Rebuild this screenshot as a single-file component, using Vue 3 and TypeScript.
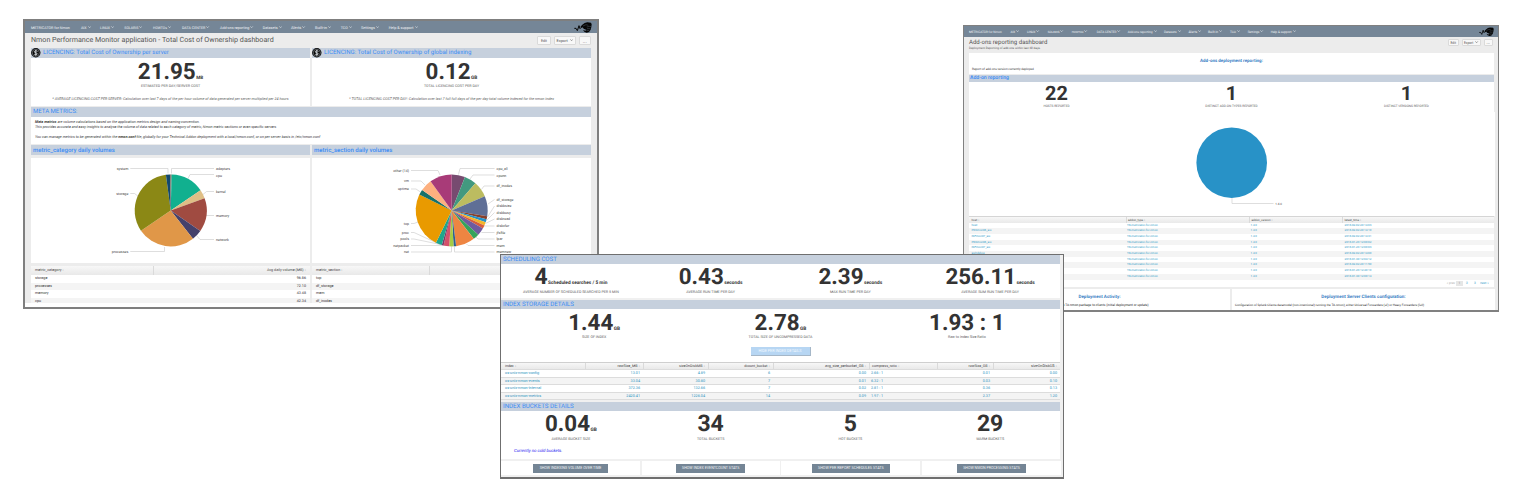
<script setup lang="ts">
import type { Directive } from 'vue'

/** Sizes a label so that it takes up the given width in pixels. */
const vFit: Directive<HTMLElement, number> = {
  mounted(el, binding) {
    const base = 20
    el.style.fontSize = `${base}px`
    const width = el.getBoundingClientRect().width
    if (width > 0) el.style.fontSize = `${(base * binding.value) / width}px`
  },
}

type Item = [string, number]
interface Metric { value: string; w: number; unit?: string; uw?: number; caption: string; cw: number }
interface Slice { to: number; color: string }
interface Label { x: number; y: number; text: string; end?: boolean; line: string }

const nav: Item[] = [
  ['METRICATOR for Nmon', 39], ['AIX', 5.6], ['LINUX', 10], ['SOLARIS', 14], ['HOWTOs', 14],
  ['DATA CENTER', 23.5], ['Add-ons reporting', 29.5], ['Datasets', 15], ['Alerts', 10.5],
  ['Built-in', 12], ['TCO', 7], ['Settings', 14], ['Help & support', 25],
]

const licences = [
  {
    title: 'LICENCING: Total Cost of Ownership per server', tw: 126,
    value: '21.95', w: 58, unit: 'MB', uw: 7,
    caption: 'ESTIMATED PER DAY/SERVER COST', cw: 59.5,
    note: '* AVERAGE LICENCING COST PER SERVER: Calculation over last 7 days of the per hour volume of data generated per server multiplied per 24 hours', nw: 237,
  },
  {
    title: 'LICENCING: Total Cost of Ownership of global indexing', tw: 147.5,
    value: '0.12', w: 45, unit: 'GB', uw: 6.3,
    caption: 'TOTAL LICENCING COST PER DAY', cw: 55.5,
    note: '* TOTAL LICENCING COST PER DAY: Calculation over last 7 full full days of the per day total volume indexed for the nmon index', nw: 205,
  },
]

function sector(cx: number, cy: number, r: number, from: number, to: number): string {
  const p = (a: number) => {
    const t = (a * Math.PI) / 180
    return `${(cx + r * Math.sin(t)).toFixed(2)} ${(cy - r * Math.cos(t)).toFixed(2)}`
  }
  return `M${cx} ${cy}L${p(from)}A${r} ${r} 0 ${to - from > 180 ? 1 : 0} 1 ${p(to)}Z`
}

function pie(cx: number, cy: number, r: number, slices: Slice[]) {
  return slices.map((s, i) => ({ color: s.color, d: sector(cx, cy, r, i ? slices[i - 1].to : 0, s.to) }))
}

const toSlices = (raw: [number, string][]): Slice[] => raw.map(([to, color]) => ({ to, color }))

const charts: { title: string; tw: number; view: string; slices: { color: string; d: string }[]; labels: Label[] }[] = [
  {
    title: 'metric_category daily volumes', tw: 82, view: '31 158 279 105',
    slices: pie(170.7, 210.4, 36, toSlices([
      [1.5, '#6d6257'], [56, '#11b08f'], [70.4, '#dfbf86'], [124.7, '#a04b41'], [141.8, '#45416b'],
      [235.7, '#e09748'], [352.3, '#8b8815'], [358.8, '#14486d'], [360, '#6d6257'],
    ])),
    labels: [
      { x: 128.3, y: 168.7, text: 'system', end: true, line: 'M130.3 168.5H168v5' },
      { x: 128.3, y: 193.7, text: 'storage', end: true, line: 'M130.3 193.5H134.5L138.5 196.5' },
      { x: 128.3, y: 252, text: 'processes', end: true, line: 'M130.3 251.5H164.5V247' },
      { x: 216, y: 168.7, text: 'adapters', line: 'M214 168.5H171.5v5' },
      { x: 216, y: 175.5, text: 'cpu', line: 'M214 174.5H190L188 178.5' },
      { x: 216, y: 191.5, text: 'kernel', line: 'M214 191.5H206.5L203 194.5' },
      { x: 216, y: 215.7, text: 'memory', line: 'M214 215.5H206' },
      { x: 216, y: 239.7, text: 'network', line: 'M214 239.5H200L196.5 235.5' },
    ],
  },
  {
    title: 'metric_section daily volumes', tw: 78.5, view: '312 158 279 105',
    slices: pie(451.7, 210.4, 36, toSlices([
      [21.6, '#774b70'], [41.2, '#42997f'], [66.8, '#bcbc60'], [99.5, '#5f6f96'], [104.4, '#87402c'],
      [109.4, '#2492c8'], [114.7, '#f2b52c'], [120, '#d85e3c'], [132.4, '#6f5b9f'], [142.2, '#35a35c'],
      [173, '#ee8542'], [177, '#2f5f8f'], [184, '#a5cc43'], [193, '#d5516b'], [196, '#7b3a68'],
      [206, '#1fa68c'], [296, '#e99a00'], [304.7, '#16716a'], [324, '#fdb07f'], [360, '#a83b78'],
    ])),
    labels: [
      { x: 409, y: 170.7, text: 'other (14)', end: true, line: 'M411 170.5H438L440 175' },
      { x: 409, y: 181, text: 'vm', end: true, line: 'M411 181H421L425 185' },
      { x: 409, y: 189, text: 'uptime', end: true, line: 'M411 189H416L420.5 192' },
      { x: 409, y: 224, text: 'top', end: true, line: 'M411 223.5H414L418 222' },
      { x: 409, y: 232.5, text: 'proc', end: true, line: 'M411 232.5H414L440 244.5' },
      { x: 409, y: 239, text: 'pools', end: true, line: 'M411 239H414L443 245' },
      { x: 409, y: 245.7, text: 'netpacket', end: true, line: 'M411 245.5H446' },
      { x: 409, y: 252, text: 'net', end: true, line: 'M411 252H451.5V246.5' },
      { x: 496.5, y: 169, text: 'cpu_all', line: 'M494.5 168.5H460L458.5 174.5' },
      { x: 496.5, y: 175.5, text: 'cpunn', line: 'M494.5 175H473L470 179' },
      { x: 496.5, y: 186, text: 'df_inodes', line: 'M494.5 186H484L481.5 189.5' },
      { x: 496.5, y: 199.5, text: 'df_storage', line: 'M494.5 199.5L488 204' },
      { x: 496.5, y: 206, text: 'diskbsize', line: 'M494.5 206L487.5 217' },
      { x: 496.5, y: 212.5, text: 'diskbusy', line: 'M494.5 212.5L486.5 220.5' },
      { x: 496.5, y: 219, text: 'diskread', line: 'M494.5 219L485.5 223.5' },
      { x: 496.5, y: 226, text: 'diskxfer', line: 'M494.5 226H484' },
      { x: 496.5, y: 232.5, text: 'jfsfile', line: 'M494.5 232.5H481.5' },
      { x: 496.5, y: 239, text: 'lpar', line: 'M494.5 239H478L476 237' },
      { x: 496.5, y: 245.7, text: 'mem', line: 'M494.5 245.5H468L466.5 244' },
      { x: 496.5, y: 252, text: 'memnew', line: 'M494.5 252H454.5V246.5' },
    ],
  },
]

const categoryRows = [['storage', '96.86'], ['processes', '72.10'], ['memory', '43.48'], ['cpu', '42.34']]
const sectionRows = ['top', 'df_storage', 'mem', 'df_inodes']

const scheduling: Metric[] = [
  { value: '4', w: 13.2, unit: 'Scheduled searches / 5 min', uw: 59.5, caption: 'AVERAGE NUMBER OF SCHEDULED SEARCHED PER 5 MIN', cw: 96 },
  { value: '0.43', w: 45, unit: 'seconds', uw: 18.3, caption: 'AVERAGE RUN TIME PER DAY', cw: 49 },
  { value: '2.39', w: 45, unit: 'seconds', uw: 18.3, caption: 'MAX RUN TIME PER DAY', cw: 41 },
  { value: '256.11', w: 70.5, unit: 'seconds', uw: 18.3, caption: 'AVERAGE SUM RUN TIME PER DAY', cw: 58 },
]
const storage: Metric[] = [
  { value: '1.44', w: 45, unit: 'GB', uw: 6.3, caption: 'SIZE OF INDEX', cw: 24.5 },
  { value: '2.78', w: 45, unit: 'GB', uw: 6.3, caption: 'TOTAL SIZE OF UNCOMPRESSED DATA', cw: 64 },
  { value: '1.93 : 1', w: 75.5, caption: 'Raw to Index Size Ratio', cw: 38 },
]
const buckets: Metric[] = [
  { value: '0.04', w: 45, unit: 'GB', uw: 6.3, caption: 'AVERAGE BUCKET SIZE', cw: 39 },
  { value: '34', w: 26.4, caption: 'TOTAL BUCKETS', cw: 27.5 },
  { value: '5', w: 13.2, caption: 'HOT BUCKETS', cw: 24 },
  { value: '29', w: 26.4, caption: 'WARM BUCKETS', cw: 28 },
]
const indexHead: Item[] = [
  ['index', 8.7], ['rawSize_MB', 20], ['sizeOnDiskMB', 23.5], ['dcount_bucket', 23.5],
  ['avg_size_perbucket_GB', 38.5], ['compress_ratio', 25], ['rawSize_GB', 19], ['sizeOnDiskGB', 23.5],
]
const indexRows = [
  ['os-unix-nmon-config', '13.01', '4.89', '6', '0.00', '2.66 : 1', '0.01', '0.00'],
  ['os-unix-nmon-events', '33.04', '30.80', '7', '0.01', '6.32 : 1', '0.03', '0.10'],
  ['os-unix-nmon-internal', '372.36', '132.66', '7', '0.02', '2.81 : 1', '0.36', '0.13'],
  ['os-unix-nmon-metrics', '2420.41', '1226.04', '14', '0.09', '1.97 : 1', '2.37', '1.20'],
]
const actions: [string, number, string][] = [
  ['SHOW INDEXING VOLUME OVER TIME', 62, 'a75'], ['SHOW INDEX EVENTCOUNT STATS', 57.5, 'a69'],
  ['SHOW PER REPORT SCHEDULES STATS', 66, 'a78'], ['SHOW NMON PROCESSING STATS', 57, 'a69'],
]

const addons: Metric[] = [
  { value: '22', w: 22.8, caption: 'HOSTS REPORTED', cw: 26.3 },
  { value: '1', w: 11.4, caption: 'DISTINCT ADD-ON TYPES REPORTED', cw: 52.5 },
  { value: '1', w: 11.4, caption: 'DISTINCT VERSIONS REPORTED', cw: 45 },
]
const hosts: [string, string][] = [
  ['host', '2018-02-02 20:14:03'], ['PRDmon06_aix', '2018-02-02 20:14:10'], ['INFmon07_aix', '2018-02-02 20:14:31'],
  ['PRDmon06_aix', '2018-01-29 12:00:02'], ['INFmon07_aix', '2018-01-29 12:00:03'], ['aixhdxbox', '2018-02-02 20:14:00'],
  ['', '2018-01-30 12:04:12'], ['', '2018-02-02 20:11:50'], ['', '2018-01-29 12:40:10'],
  ['', '2018-01-30 12:00:14'],
]
</script>

<template>
  <div class="canvas">
    <section class="win tco">
      <nav class="nav">
        <div v-for="([t, w], i) in nav" :key="t" class="item">
          <span v-fit="w" class="fit">{{ t }}</span>
          <svg v-if="i" class="chev" viewBox="0 0 6 4"><path d="M.6.6 3 3.2 5.4.6" /></svg>
        </div>
        <svg class="logo" viewBox="0 0 54 33"><path class="wave" d="M1 19h5l4 7 5-15 3 9 3-3" /><path d="M19 15 24 9 32 3 40 1 51 2 53 7 52 15 50 23 45 30 38 32 31 29 27 24 34 26 38 24 29 20 26 16 23 18Z" /><path class="cut" d="M27 12l9-4 7 2M38 15l9-2 5 1M39 20l10 0M38 25l8 1" /></svg>
      </nav>
      <header class="head">
        <h1 v-fit="243" class="fit">Nmon Performance Monitor application - Total Cost of Ownership dashboard</h1>
        <div class="tools">
          <button class="b1"><span v-fit="6" class="fit">Edit</span></button>
          <button class="b2"><span v-fit="11.5" class="fit">Export</span><svg class="chev" viewBox="0 0 6 4"><path d="M.6.6 3 3.2 5.4.6" /></svg></button>
          <button class="b3"><span v-fit="4" class="fit">...</span></button>
        </div>
      </header>
      <div class="body">
        <div class="pair">
          <article v-for="l in licences" :key="l.title" class="lic">
            <div class="band coinband">
              <svg class="coin" viewBox="0 0 20 20"><circle cx="10" cy="10" r="9.8" /><circle class="ring" cx="10" cy="10" r="7.4" /><path d="M13.4 7.2C12.6 5.6 7 5.2 7 8s6 1.5 6 4.2-5.4 2.4-6.4.4M10 3.8v12.4" /></svg>
              <span v-fit="l.tw" class="fit">{{ l.title }}</span>
            </div>
            <div class="num"><b v-fit="l.w" class="fit">{{ l.value }}</b><i v-fit="l.uw" class="fit unit">{{ l.unit }}</i></div>
            <div class="cap"><span v-fit="l.cw" class="fit">{{ l.caption }}</span></div>
            <div class="note"><span v-fit="l.nw" class="fit">{{ l.note }}</span></div>
          </article>
        </div>
        <div class="meta">
          <div class="band"><span v-fit="44.5" class="fit">META METRICS:</span></div>
          <div class="metatext">
            <p v-fit="165" class="fit"><b>Meta metrics</b> are volume calculations based on the application metrics design and naming convention.</p>
            <p v-fit="243" class="fit">This provides accurate and easy insights to analyse the volume of data related to each category of metric, Nmon metric sections or even specific servers.</p>
            <p v-fit="286.5" class="fit last">You can manage metrics to be generated within the <b>nmon.conf</b> file, globally for your Technical Addon deployment with a local/nmon.conf, or on per server basis in /etc/nmon.conf</p>
          </div>
        </div>
        <div class="pair">
          <div v-for="c in charts" :key="c.title">
            <div class="band wide"><span v-fit="c.tw" class="fit">{{ c.title }}</span></div>
            <svg class="chart" :viewBox="c.view">
              <path v-for="(l, i) in c.labels" :key="'l' + i" class="lead" :d="l.line" />
              <path v-for="(s, i) in c.slices" :key="'s' + i" :d="s.d" :fill="s.color" />
              <text v-for="(l, i) in c.labels" :key="'t' + i" :x="l.x" :y="l.y + 1.1" :text-anchor="l.end ? 'end' : 'start'">{{ l.text }}</text>
            </svg>
          </div>
        </div>
        <div class="pair tables">
          <div class="tbl cat">
            <div class="tr th"><span>metric_category <em>↕</em></span><span class="r sep">Avg daily volume (MB) <em>↕</em></span></div>
            <div v-for="r in categoryRows" :key="r[0]" class="tr"><span>{{ r[0] }}</span><span class="r">{{ r[1] }}</span></div>
          </div>
          <div class="tbl sec">
            <div class="tr th"><span>metric_section <em>↕</em></span><span class="sep"></span></div>
            <div v-for="r in sectionRows" :key="r" class="tr"><span>{{ r }}</span><span></span></div>
          </div>
        </div>
      </div>
    </section>

    <section class="win addons">
      <nav class="nav">
        <div v-for="([t, w], i) in nav" :key="t" class="item">
          <span v-fit="w * 0.843" class="fit">{{ t }}</span>
          <svg v-if="i" class="chev" viewBox="0 0 6 4"><path d="M.6.6 3 3.2 5.4.6" /></svg>
        </div>
        <svg class="logo" viewBox="0 0 54 33"><path class="wave" d="M1 19h5l4 7 5-15 3 9 3-3" /><path d="M19 15 24 9 32 3 40 1 51 2 53 7 52 15 50 23 45 30 38 32 31 29 27 24 34 26 38 24 29 20 26 16 23 18Z" /><path class="cut" d="M27 12l9-4 7 2M38 15l9-2 5 1M39 20l10 0M38 25l8 1" /></svg>
      </nav>
      <header class="head">
        <div>
          <h1 v-fit="78.5" class="fit">Add-ons reporting dashboard</h1>
          <p v-fit="72" class="fit">Deployment Reporting of add-ons within last 30 days.</p>
        </div>
        <div class="tools">
          <button class="b1"><span v-fit="5.5" class="fit">Edit</span></button>
          <button class="b2"><span v-fit="9.5" class="fit">Export</span><svg class="chev" viewBox="0 0 6 4"><path d="M.6.6 3 3.2 5.4.6" /></svg></button>
          <button class="b3"><span v-fit="3.5" class="fit">...</span></button>
        </div>
      </header>
      <div class="body">
        <div class="intro">
          <h2 v-fit="63" class="fit">Add-ons deployment reporting:</h2>
          <p v-fit="62" class="fit">Report of add-ons version currently deployed</p>
        </div>
        <div class="band"><span v-fit="39" class="fit">Add-on reporting</span></div>
        <div class="metrics three">
          <div v-for="m in addons" :key="m.caption">
            <div class="num"><b v-fit="m.w" class="fit">{{ m.value }}</b></div>
            <div class="cap"><span v-fit="m.cw" class="fit">{{ m.caption }}</span></div>
          </div>
        </div>
        <svg class="disc" viewBox="969 112 525 104">
          <path class="lead" d="M1231.5 197V203.5H1273" />
          <circle cx="1231.2" cy="162.7" r="35.3" />
          <text x="1274.8" y="204.6">1.4.0</text>
        </svg>
        <div class="tbl">
          <div class="tr th"><span>host <em>↕</em></span><span class="sep">addon_type <em>↕</em></span><span class="sep">addon_version <em>↕</em></span><span class="sep">latest_time <em>↕</em></span></div>
          <div v-for="(h, i) in hosts" :key="i" class="tr"><span>{{ h[0] }}</span><span>TA-metricator-for-nmon</span><span>1.4.0</span><span>{{ h[1] }}</span></div>
        </div>
        <div class="pager"><span class="off">« prev</span><span class="cur">1</span><span>2</span><span>3</span><span>next »</span></div>
        <div class="foot">
          <div>
            <h2 v-fit="42" class="fit">Deployment Activity:</h2>
            <p v-fit="177" class="fit">Analyse the deployment activity by the Deployment Server of the TA-nmon package to clients (initial deployment or update)</p>
          </div>
          <div>
            <h2 v-fit="84.5" class="fit">Deployment Server Clients configuration:</h2>
            <p v-fit="190" class="fit">Configuration of Splunk Clients datamodel (non-intentional) running the TA-nmon), either Universal Forwarders (uf) or Heavy Forwarders (full)</p>
          </div>
        </div>
      </div>
    </section>

    <section class="win index">
      <div class="body">
        <div class="band"><span v-fit="54" class="fit">SCHEDULING COST</span></div>
        <div class="metrics four">
          <div v-for="m in scheduling" :key="m.caption">
            <div class="num"><b v-fit="m.w" class="fit">{{ m.value }}</b><i v-fit="m.uw" class="fit unit">{{ m.unit }}</i></div>
            <div class="cap"><span v-fit="m.cw" class="fit">{{ m.caption }}</span></div>
          </div>
        </div>
        <div class="band gap"><span v-fit="71" class="fit">INDEX STORAGE DETAILS</span></div>
        <div class="metrics three">
          <div v-for="m in storage" :key="m.caption">
            <div class="num"><b v-fit="m.w" class="fit">{{ m.value }}</b><i v-if="m.unit" v-fit="m.uw" class="fit unit">{{ m.unit }}</i></div>
            <div class="cap"><span v-fit="m.cw" class="fit">{{ m.caption }}</span></div>
          </div>
        </div>
        <div class="hide"><button><span v-fit="43" class="fit">HIDE PER INDEX DETAILS</span></button></div>
        <div class="tbl">
          <div class="tr th">
            <span v-for="([h, w], i) in indexHead" :key="h" class="cell" :class="{ sep: i }"><span v-fit="w" class="fit">{{ h }}</span><em>↕</em></span>
          </div>
          <div v-for="r in indexRows" :key="r[0]" class="tr"><span v-for="(v, i) in r" :key="i" class="cell">{{ v }}</span></div>
        </div>
        <div class="band gap"><span v-fit="71" class="fit">INDEX BUCKETS DETAILS</span></div>
        <div class="metrics four">
          <div v-for="m in buckets" :key="m.caption">
            <div class="num"><b v-fit="m.w" class="fit">{{ m.value }}</b><i v-if="m.unit" v-fit="m.uw" class="fit unit">{{ m.unit }}</i></div>
            <div class="cap"><span v-fit="m.cw" class="fit">{{ m.caption }}</span></div>
          </div>
        </div>
        <div class="cold"><span v-fit="48.5" class="fit">Currently no cold buckets.</span></div>
        <div class="actions">
          <div v-for="[t, w, c] in actions" :key="t"><button :class="c"><span v-fit="w" class="fit">{{ t }}</span></button></div>
        </div>
      </div>
    </section>
  </div>
</template>

<style>
body { background: #fff; overflow: hidden; }
</style>

<style scoped>
.canvas { position: relative; width: 1525px; height: 499px; overflow: hidden; background: #fff; font-family: Roboto, "Liberation Sans", sans-serif; font-size: 4px; color: #333; text-rendering: geometricPrecision; }
.canvas * { box-sizing: border-box; }
h1, h2, p { margin: 0; font-weight: 400; }
button { border: 0; padding: 0; margin: 0; font: inherit; color: inherit; display: flex; align-items: center; justify-content: center; }
.fit { display: block; width: fit-content; flex: none; white-space: nowrap; }
.win { position: absolute; overflow: hidden; background: #fff; border: 2px solid #7f7f7f; }
.tco { left: 23px; top: 19px; width: 576px; height: 290px; }
.addons { left: 963px; top: 25px; width: 536px; height: 287px; border-width: 1px 1px 2px 1px; border-color: #808080; }
.index { left: 500px; top: 254px; width: 564px; height: 225px; border-color: #6f6f6f; border-width: 1px 1px 2px; }

.nav { display: grid; align-items: center; background: #758697; color: #eef2f5; }
.item { display: flex; align-items: center; gap: 1px; }
.chev { width: 3.2px; height: 2.2px; fill: none; stroke: currentColor; stroke-width: 1; flex: none; }
.logo { justify-self: end; grid-column: 14; fill: #050505; }
.wave { fill: none; stroke: #050505; stroke-width: 3; }
.cut { fill: none; stroke: #5f6d7a; stroke-width: 1.3; }
.tco .nav { height: 12px; padding: 1px 5px 0 6px; grid-template-columns: 50px 19px 24.3px 28.7px 29px 38px 42.7px 28.3px 24px 25.7px 20.3px 27.7px 30px 1fr; }
.tco .logo { width: 18px; height: 11px; }
.addons .nav { height: 11px; padding: 0 4px 0 5px; grid-template-columns: 41.5px 16.5px 20.7px 24px 25px 31px 36.3px 24.4px 19.6px 22px 17.7px 23px 25px 1fr; }
.addons .logo { width: 15px; height: 9.5px; }

.head { display: flex; justify-content: space-between; background: #ececec; }
.tco .head { height: 15px; padding: 0 6px; }
.tco h1 { line-height: 14px; color: #555; }
.tools { display: flex; gap: 2.5px; }
.tools button { background: #f8f8f8; border: 1px solid #dadada; border-radius: 1px; gap: 2px; color: #555; }
.tco .tools { padding-top: 3px; }
.tco .tools button { height: 9px; }
.tco .b1 { width: 14px; } .tco .b2 { width: 22.5px; } .tco .b3 { width: 12.5px; }
.body { background: #ececec; }
.tco .body { padding: 0 6px; height: 255px; overflow: hidden; }
.pair { display: grid; grid-template-columns: 279px 279px; gap: 2px; }
.band { display: flex; align-items: center; background: #c6d0dd; color: #3a8cf6; padding-left: 2px; }
.tco .band { height: 10px; line-height: 10px; }
.tco .wide { font-weight: 500; padding-top: 1px; }
.coinband { gap: 2.5px; }
.tco .coinband { padding-left: 0; }
.coin { width: 9.6px; height: 9.6px; fill: #0a0a0a; flex: none; }
.coin .ring { fill: none; stroke: #d5dce6; stroke-width: .8; }
.coin path { fill: none; stroke: #e8ecf2; stroke-width: 1.7; }
.lic { height: 58px; background: #fff; margin-bottom: 1px; }
.num { display: flex; justify-content: center; align-items: baseline; height: 18px; line-height: 18px; color: #333; }
.num b { font-weight: 700; }
.unit { font-style: normal; font-weight: 700; margin-left: .5px; line-height: 6px; }
.cap, .note { display: flex; justify-content: center; height: 6px; line-height: 6px; color: #606060; }
.lic .num { margin-top: 5px; }
.lic .cap { margin-top: 2px; }
.note { margin-top: 6.5px; font-style: italic; }
.meta { background: #fff; margin-bottom: 1px; }
.metatext { height: 27px; padding: 3.2px 4px 0; font-style: italic; color: #3a3a3a; }
.metatext p { line-height: 4.8px; }
.metatext .last { margin-top: 4.8px; }
.chart { display: block; width: 279px; height: 105px; margin-top: 3px; background: #fff; }
.chart text, .disc text { font-size: 3.6px; fill: #444; }
.lead { fill: none; stroke: #d0d0d0; stroke-width: .7; }
.tbl { background: #fff; }
.tr { display: grid; }
.tr > span { padding: 0 4px; white-space: nowrap; overflow: hidden; }
.tr:nth-child(odd) { background: #f4f4f4; }
.tr.th { background: linear-gradient(#f7f7f7, #e9e9e9); color: #444; }
.r { text-align: right; }
.sep { border-left: 1px solid #dadada; }
em { font-style: normal; font-size: 3px; color: #aaa; }
.tables { margin-top: 3px; height: 37px; }
.tco .tr { height: 7.5px; line-height: 7.5px; font-size: 3.7px; }
.tco .th { height: 9px; line-height: 9px; }
.cat .tr { grid-template-columns: 122px 157px; }
.sec .tr { grid-template-columns: 117px 162px; }

.addons .head { height: 15.5px; padding: 0 5px; line-height: 6px; }
.addons h1 { line-height: 8px; margin-top: 1.5px; color: #555; }
.addons .head p { line-height: 3px; color: #555; }
.addons .tools { padding-top: 2px; }
.addons .tools button { height: 7px; }
.addons .b1 { width: 11.5px; } .addons .b2 { width: 19.5px; } .addons .b3 { width: 9.5px; }
.addons .body { padding: 0 4px 0 5px; height: 260px; }
.intro { height: 21.5px; background: #fff; padding: 6px 3px 0; margin-bottom: .5px; }
.addons h2 { font-weight: 700; color: #3b80c4; margin: 0 auto; line-height: 6px; }
.intro p { line-height: 5px; margin-top: 2.5px; }
.addons .band { height: 7.5px; line-height: 7.5px; padding-left: 1px; font-weight: 500; padding-top: .5px; }
.metrics { display: grid; background: #fff; }
.three { grid-template-columns: repeat(3, 1fr); }
.four { grid-template-columns: repeat(4, 1fr); }
.addons .metrics { height: 30px; padding-top: 2.8px; }
.addons .cap { margin-top: .5px; }
.disc { display: block; width: 526px; height: 104px; background: #fff; }
.disc circle { fill: #2892c7; }
.disc text { font-size: 3px; }
.addons .tr { grid-template-columns: 156.5px 123.5px 93px 153px; height: 5.71px; line-height: 5.71px; font-size: 2.95px; color: #2b9ac8; }
.addons .tr > span { padding: 0 2.5px; }
.addons .tr > span.sep { padding-left: 1.5px; }
.addons .tr.th { height: 6.5px; line-height: 6px; color: #444; border-top: 1px solid #d5d5d5; }
.addons .tr > span:nth-child(2), .addons .tr > span:nth-child(3) { padding-left: 1.5px; }
.pager { height: 7px; background: #fff; display: flex; justify-content: flex-end; align-items: center; padding-right: 4px; font-size: 3.2px; color: #2b9ac8; }
.pager span { width: 8px; text-align: center; }
.pager .off { color: #aaa; width: 10px; }
.pager .cur { background: #e6e6e6; color: #888; width: 7px; line-height: 5px; }
.pager span:last-child { width: 11px; }
.foot { display: grid; grid-template-columns: 261px 263px; gap: 2px; margin-top: 2.5px; height: 22px; line-height: 5px; }
.foot > div { background: #fff; padding: 5.8px 2px 0; }
.foot p { line-height: 5px; margin: 2.5px 0 0 1px; color: #222; }

.index .body { padding-right: 3px; height: 222px; background: #f0f0f0; }
.index .band { height: 9px; line-height: 9px; }
.index .gap { margin-top: 2px; }
.index .metrics { padding-top: 4.2px; height: 34px; }
.index .cap { margin-top: 3.3px; }
.index .three { height: 38px; padding-top: 5px; }
.index .three .cap { margin-top: 2.3px; }
.hide { height: 15px; background: #fff; display: flex; justify-content: center; }
.hide button { width: 60px; height: 9px; background: #b7d6f3; color: #f4faff; border: solid #a5b7c8; border-width: 0 1px 1px 0; }
.index .tr { grid-template-columns: 84px 58px 65px 65px 96px 68px 56px 67px; height: 7.6px; line-height: 7px; font-size: 3.75px; color: #2b93c0; border-bottom: .6px solid #dcdcdc; }
.index .tr.th { height: 8px; color: #444; border-top: 1px solid #cfcfcf; }
.cell { display: flex; justify-content: flex-end; gap: 1px; }
.index .tr > .cell { padding: 0 3px; }
.index .tr > .cell:first-child { padding-left: 4px; }
.index .tr > .cell:nth-child(1), .index .tr > .cell:nth-child(6) { justify-content: flex-start; }
.index .tr > .cell:nth-child(6) { padding-left: 2px; }
.index .tbl + .gap { margin-top: 1.5px; }
.index .gap + .four { height: 37px; }
.cold { height: 11.5px; padding: .8px 0 0 13px; line-height: 6px; background: #fff; color: #2014f0; font-style: italic; }
.actions { display: grid; grid-template-columns: 139px 138px 139px 139px; gap: 1.7px; margin-top: 2px; height: 14px; }
.actions > div { background: #fff; display: flex; justify-content: center; align-items: center; }
.actions button { height: 9px; background: #748595; color: #f2f4f6; }
.a75 { width: 75px; } .a69 { width: 69px; } .a78 { width: 78px; }
</style>
